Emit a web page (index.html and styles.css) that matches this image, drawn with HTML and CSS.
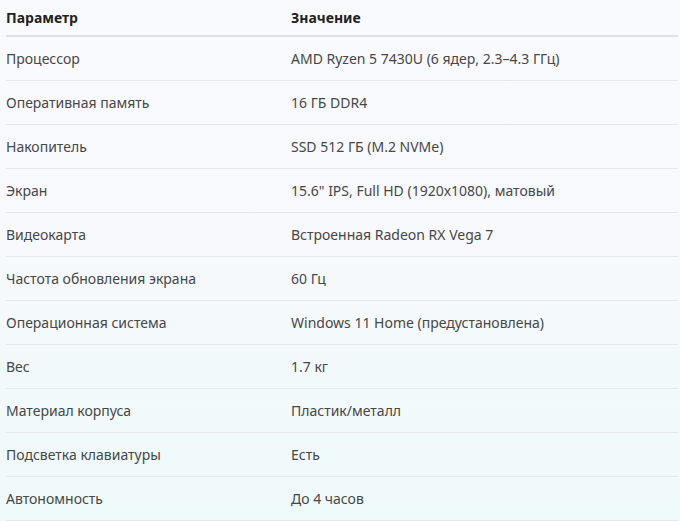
FILE: index.html
```html
<!DOCTYPE html>
<html lang="ru">
<head>
<meta charset="utf-8">
<link rel="stylesheet" href="styles.css">
</head>
<body>
<table class="specs">
  <thead>
    <tr><th class="col-name">Параметр</th><th>Значение</th></tr>
  </thead>
  <tbody>
    <tr><td>Процессор</td><td>AMD Ryzen 5 7430U (6 ядер, 2.3–4.3 ГГц)</td></tr>
    <tr><td>Оперативная память</td><td>16 ГБ DDR4</td></tr>
    <tr><td>Накопитель</td><td>SSD 512 ГБ (M.2 NVMe)</td></tr>
    <tr><td>Экран</td><td>15.6" IPS, Full HD (1920x1080), матовый</td></tr>
    <tr><td>Видеокарта</td><td>Встроенная Radeon RX Vega 7</td></tr>
    <tr><td>Частота обновления экрана</td><td>60 Гц</td></tr>
    <tr><td>Операционная система</td><td>Windows 11 Home (предустановлена)</td></tr>
    <tr><td>Вес</td><td>1.7 кг</td></tr>
    <tr><td>Материал корпуса</td><td>Пластик/металл</td></tr>
    <tr><td>Подсветка клавиатуры</td><td>Есть</td></tr>
    <tr><td>Автономность</td><td>До 4 часов</td></tr>
  </tbody>
</table>
</body>
</html>
```
FILE: styles.css
```css
html, body {
  margin: 0;
  padding: 0;
}
body {
  min-height: 521px;
  background: linear-gradient(180deg, #f9fafd 0%, #f7f9fc 45%, #eefaf9 100%);
  font-family: "Noto Sans", "Open Sans", sans-serif;
  font-size: 14px;
  color: #474747;
  overflow: hidden;
}
.specs {
  margin-left: 6px;
  width: 672px;
  border-collapse: collapse;
}
.specs th {
  text-align: left;
  font-weight: 700;
  color: #222;
  height: 35px;
  padding: 0;
  border-bottom: 2px solid #dfe0e5;
  vertical-align: middle;
}
.specs .col-name {
  width: 285px;
}
.specs td {
  height: 43px;
  padding: 0;
  border-bottom: 1px solid #e7e8ec;
  vertical-align: middle;
}
```
